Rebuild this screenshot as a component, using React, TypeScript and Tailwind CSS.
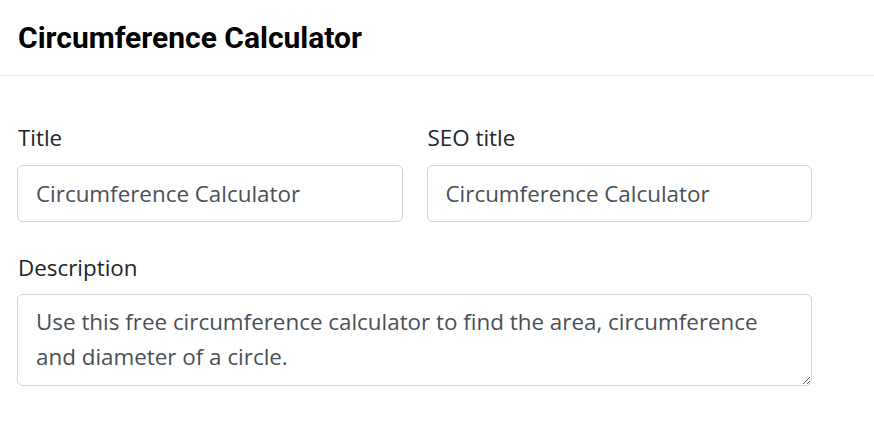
export default function App() {
  return (
    <div className="min-h-screen bg-white font-['Open_Sans',sans-serif]">
      <div className="flex h-[76px] items-center border-b border-[#e9ecef] px-[18px]">
        <h1 className="font-['Roboto',sans-serif] text-[30px] font-bold text-black">
          Circumference Calculator
        </h1>
      </div>
      <div className="px-[17px] pt-[45px]">
        <div className="w-[795px]">
          <div className="grid grid-cols-2 gap-x-6">
            <div>
              <label className="mb-[11px] block pl-px text-[22.4px] leading-[33px] text-[#212529]">Title</label>
              <input
                className="block h-[57px] w-full rounded-[6px] border border-[#ced4da] px-[18px] text-[22.4px] text-[#495057] outline-none"
                defaultValue="Circumference Calculator"
              />
            </div>
            <div>
              <label className="mb-[11px] block pl-px text-[22.4px] leading-[33px] text-[#212529]">SEO title</label>
              <input
                className="block h-[57px] w-full rounded-[6px] border border-[#ced4da] px-[18px] text-[22.4px] text-[#495057] outline-none"
                defaultValue="Circumference Calculator"
              />
            </div>
          </div>
          <label className="mt-[29px] mb-[10px] block pl-px text-[22.4px] leading-[33px] text-[#212529]">Description</label>
          <textarea
            className="block h-[92px] w-full rounded-[6px] border border-[#ced4da] px-[18px] py-[9px] text-[22.4px] leading-[35px] text-[#495057] outline-none"
            defaultValue="Use this free circumference calculator to find the area, circumference and diameter of a circle."
          />
        </div>
      </div>
    </div>
  )
}
